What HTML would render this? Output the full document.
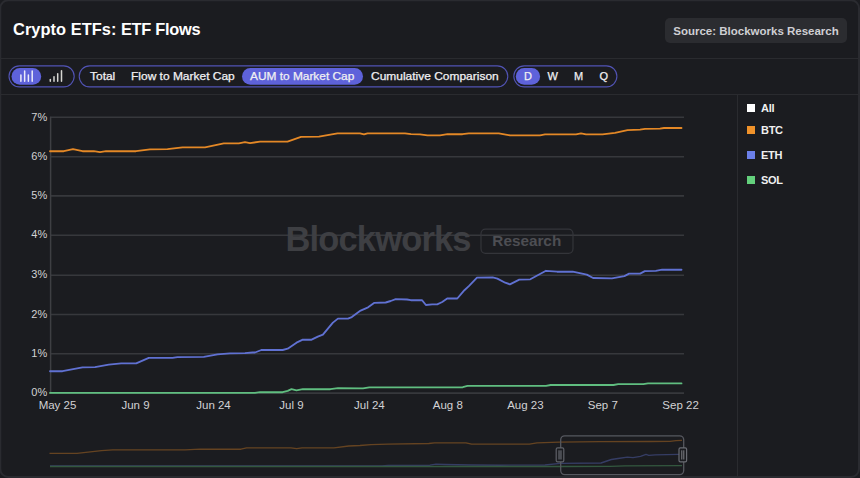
<!DOCTYPE html>
<html><head><meta charset="utf-8"><title>Crypto ETFs: ETF Flows</title>
<style>
*{box-sizing:border-box;margin:0;padding:0}
html,body{width:860px;height:478px;background:#1b1c20;overflow:hidden}
body{font-family:"Liberation Sans",sans-serif;color:#fff;position:relative}
.card{position:absolute;left:0;top:0;width:860px;height:478px;background:#1b1c20}
.title{position:absolute;left:13px;top:19px;font-size:16.4px;font-weight:700;line-height:20px;color:#fff;white-space:nowrap;letter-spacing:-0.13px}
.src{position:absolute;left:665px;top:18px;width:182px;height:25px;border-radius:5px;background:#2b2c30;color:#cfcfd3;font-size:11.5px;font-weight:700;line-height:27px;text-align:center;white-space:nowrap;overflow:hidden}
.hl{position:absolute;left:0;width:860px;height:1px;background:#2a2b2f}
.pill{position:absolute;top:65px;height:23px;border:1px solid #5456b8;border-radius:12px}
.act{position:absolute;top:68px;height:17px;border-radius:9px;background:#5a5fd6}
.t{position:absolute;top:68.4px;height:17px;line-height:17px;font-size:11px;color:#f0f0f2;white-space:nowrap;transform:scaleX(1.088);transform-origin:0 50%;-webkit-text-stroke:0.25px #f0f0f2}
.yl{position:absolute;left:9.2px;width:38px;text-align:right;font-size:11px;line-height:12px;color:#d2d2d4}
.xl{position:absolute;top:399.4px;width:60px;margin-left:-30px;text-align:center;font-size:11.5px;line-height:13px;color:#d2d2d4;white-space:nowrap}
.lg{position:absolute;left:761px;font-size:11px;font-weight:700;line-height:12px;color:#f0f0f0;letter-spacing:-0.3px}
.sq{position:absolute;left:747px;width:8px;height:8px}
svg{position:absolute;left:0;top:0}
</style></head><body>
<div class="card"></div>
<svg width="860" height="478" viewBox="0 0 860 478"><rect x="0.3" y="0.3" width="858.7" height="476.7" rx="8" fill="none" stroke="#2a2b30" stroke-width="2"/></svg>
<div class="title"><span style="letter-spacing:0.05px">Crypto ETFs:</span> <span style="letter-spacing:-0.3px">ETF Flows</span></div>
<div class="src">Source: Blockworks Research</div>
<div class="hl" style="top:58px"></div>
<div class="hl" style="top:94px"></div>


<svg width="860" height="478" viewBox="0 0 860 478">
  <g fill="none" stroke="#5153b4" stroke-width="1.1">
    <rect x="9" y="65.85" width="65.2" height="21" rx="10.5"/>
    <rect x="79.2" y="65.85" width="428.6" height="21" rx="10.5"/>
    <rect x="513.8" y="65.85" width="103.1" height="21" rx="10.5"/>
  </g>
  <g fill="#5e62da">
    <rect x="11.5" y="68" width="29.7" height="16.8" rx="8.4"/>
    <rect x="242" y="68" width="121" height="16.8" rx="8.4"/>
    <rect x="515.8" y="68" width="24.3" height="16.8" rx="8.4"/>
  </g>
</svg>
<div class="t" style="left:89.5px">Total</div>
<div class="t" style="left:130.5px">Flow to Market Cap</div>
<div class="t" style="left:250.2px;transform:scaleX(1.08)">AUM to Market Cap</div>
<div class="t" style="left:371px">Cumulative Comparison</div>
<div class="t" style="left:523.9px;transform:none">D</div>
<div class="t" style="left:547.4px;transform:none">W</div>
<div class="t" style="left:574.1px;transform:none">M</div>
<div class="t" style="left:599.6px;transform:none">Q</div>

<svg width="860" height="478" viewBox="0 0 860 478">
  <!-- toolbar icons -->
  <g stroke="#ececfa" stroke-width="1.5" stroke-linecap="round">
    <line x1="20.9" y1="75" x2="20.9" y2="81.2"/><line x1="24.65" y1="71" x2="24.65" y2="81.2"/><line x1="28.4" y1="75" x2="28.4" y2="81.2"/><line x1="32.2" y1="71" x2="32.2" y2="81.2"/>
  </g>
  <g stroke="#d6d6d2" stroke-width="1.5" stroke-linecap="round">
    <line x1="50.3" y1="79.6" x2="50.3" y2="81.2"/><line x1="54" y1="76.8" x2="54" y2="81.2"/><line x1="57.7" y1="73.8" x2="57.7" y2="81.2"/><line x1="61.5" y1="70.7" x2="61.5" y2="81.2"/>
  </g>
  <!-- separator right -->
  <line x1="737.5" y1="94" x2="737.5" y2="478" stroke="#2a2b2f" stroke-width="1"/>
  <!-- grid -->
  <g stroke="#37383c" stroke-width="1.6">
    <line x1="50" y1="117.30" x2="684" y2="117.30"/>
    <line x1="50" y1="156.70" x2="684" y2="156.70"/>
    <line x1="50" y1="195.90" x2="684" y2="195.90"/>
    <line x1="50" y1="235.20" x2="684" y2="235.20"/>
    <line x1="50" y1="275.20" x2="684" y2="275.20"/>
    <line x1="50" y1="314.50" x2="684" y2="314.50"/>
    <line x1="50" y1="353.80" x2="684" y2="353.80"/>
    <line x1="50" y1="393.10" x2="684" y2="393.10"/>
    <line x1="50.6" y1="116.80" x2="50.6" y2="393.60" stroke="#3e3f43" stroke-width="1.5"/>
  </g>
  <!-- watermark -->
  <text x="285.5" y="251" font-family="Liberation Sans, sans-serif" font-weight="700" font-size="34.5" letter-spacing="-0.85" fill="#3e3f43">Blockworks</text>
  <rect x="481" y="229.1" width="92" height="24.2" rx="4.5" fill="none" stroke="#34353a" stroke-width="1.2"/>
  <text x="526.8" y="246.4" text-anchor="middle" font-family="Liberation Sans, sans-serif" font-weight="700" font-size="15.3" fill="#4d4e53">Research</text>
  <!-- series -->
  <g fill="none" stroke-width="1.85" stroke-linejoin="round" stroke-linecap="round">
    <polyline stroke="#60be80" points="50.0,392.9 255.0,392.9 260.0,392.2 282.7,392.2 287.7,390.9 291.5,389.2 296.5,390.4 302.8,389.2 330.4,389.2 338.0,388.2 363.0,388.4 369.3,387.4 462.8,387.2 467.5,385.9 546.0,385.9 550.7,385.0 613.5,385.0 618.2,384.1 643.3,384.1 648.0,383.4 681.5,383.4"/>
    <polyline stroke="#6071d2" points="50.0,371.2 62.5,371.2 82.5,367.4 95.0,367.2 108.8,364.6 121.2,363.4 136.2,363.4 148.8,357.9 172.5,357.9 177.5,357.2 203.8,356.9 217.5,354.4 230.0,353.4 245.0,353.2 252.5,352.5 255.0,352.5 261.3,350.0 282.7,350.0 287.7,348.7 296.5,342.7 302.8,339.7 311.6,339.7 317.8,336.7 322.9,334.7 332.9,322.6 337.9,318.6 348.0,318.6 351.8,317.1 360.6,310.6 368.1,307.3 374.4,302.8 385.7,302.5 390.7,301.0 395.7,299.2 407.0,299.5 410.8,300.2 422.1,300.2 425.9,305.0 432.2,304.3 437.2,304.3 442.2,302.0 447.2,298.5 457.3,298.5 464.4,290.2 469.1,285.9 477.0,277.7 492.7,277.4 497.4,278.6 505.2,282.7 509.9,284.3 519.3,279.6 530.3,279.3 546.0,270.8 557.0,271.7 572.7,271.7 586.8,274.6 593.1,278.0 611.9,278.3 624.4,276.1 629.1,273.6 640.1,273.6 644.8,271.1 655.8,270.8 662.1,269.7 681.5,269.7"/>
    <polyline stroke="#e48826" points="50.0,151.2 63.8,151.2 73.0,149.2 82.5,151.2 93.8,151.2 100.0,152.2 106.0,151.2 136.0,151.2 150.0,149.4 167.5,149.2 182.5,147.4 205.0,147.4 223.8,143.4 238.8,143.4 245.0,142.2 250.0,143.2 260.0,141.6 287.5,141.6 301.0,136.9 319.0,136.6 337.5,133.4 360.0,133.4 364.0,134.4 367.5,133.4 405.0,133.4 411.0,134.2 420.0,134.4 427.5,135.4 440.0,135.4 447.5,134.2 462.5,134.2 468.8,133.4 498.8,133.4 510.0,135.4 540.0,135.4 545.0,134.4 576.0,134.4 581.0,133.4 586.0,134.4 602.5,134.4 615.0,132.9 627.5,130.2 640.0,129.6 645.0,128.9 660.0,128.7 664.0,128.0 681.5,128.0"/>
  </g>
  <!-- navigator -->
  <g fill="none" stroke-width="1.35" stroke-linejoin="round" opacity="0.36">
    <polyline stroke="#6577dd" points="50,465.8 382,465.8 388,465.3 430,465.2 436,464.2 445,464.5 470,465 500,465.2 545,465 560,463.4 601,463 611.4,459.5 618,458.5 627.4,457.2 633,457.6 640.5,456.3 646,454.4 648.8,455.3 655.3,454.8 678.6,454.4 682,454.4"/>
    <polyline stroke="#5fc277" points="50,466.5 560,466.5 610,466.3 625,465.8 682,465.6"/>
    <polyline stroke="#e98a24" points="49.5,453.4 77,453.4 101.4,450.6 112.6,449.9 185,449.9 200,449.2 241,449.2 246.5,447.8 291,447.8 296.7,448.7 302,447.8 334,447.8 348.8,446 360,445.5 371,444.7 388,444.1 428.8,443.5 434.4,442.8 466,442.8 471.6,444.1 529.5,444.1 537,442.8 559.3,442.2 600,441.7 650,441.5 670,441.3 676,440.6 682,440.3"/>
  </g>
  <rect x="560.7" y="435.8" width="123" height="38.8" rx="4" fill="none" stroke="#56585f" stroke-width="1.3"/>
  <rect x="556.2" y="447.9" width="7.6" height="14" rx="1.4" fill="#1b1c20" stroke="#5f6168" stroke-width="1.2"/>
  <rect x="558.1" y="450.3" width="3.8" height="9.2" fill="#4b4d53"/>
  <rect x="679" y="447.9" width="7.6" height="14" rx="1.4" fill="#1b1c20" stroke="#6a6c73" stroke-width="1.2"/>
  <line x1="681.8" y1="450.3" x2="681.8" y2="459.5" stroke="#8a8c93" stroke-width="0.9"/>
  <line x1="683.8" y1="450.3" x2="683.8" y2="459.5" stroke="#8a8c93" stroke-width="0.9"/>
</svg>

<div class="yl" style="top:111.4px">7%</div>
<div class="yl" style="top:149.8px">6%</div>
<div class="yl" style="top:189.0px">5%</div>
<div class="yl" style="top:228.3px">4%</div>
<div class="yl" style="top:268.3px">3%</div>
<div class="yl" style="top:307.6px">2%</div>
<div class="yl" style="top:346.9px">1%</div>
<div class="yl" style="top:386.2px">0%</div>

<div class="xl" style="left:57.5px">May 25</div>
<div class="xl" style="left:135.5px">Jun 9</div>
<div class="xl" style="left:213.5px">Jun 24</div>
<div class="xl" style="left:291.5px">Jul 9</div>
<div class="xl" style="left:369.4px">Jul 24</div>
<div class="xl" style="left:447.8px">Aug 8</div>
<div class="xl" style="left:525.4px">Aug 23</div>
<div class="xl" style="left:602.8px">Sep 7</div>
<div class="xl" style="left:680.6px">Sep 22</div>

<div class="sq" style="top:104px;background:#fff"></div><div class="lg" style="top:102px">All</div>
<div class="sq" style="top:126px;background:#f0922a"></div><div class="lg" style="top:124px">BTC</div>
<div class="sq" style="top:151px;background:#6b7fe8"></div><div class="lg" style="top:149px">ETH</div>
<div class="sq" style="top:176px;background:#63d07c"></div><div class="lg" style="top:174px">SOL</div>
</body></html>
